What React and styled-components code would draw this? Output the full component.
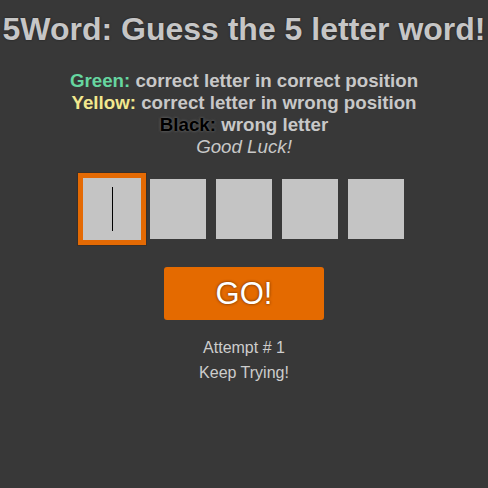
import React from "react";
import styled, { createGlobalStyle } from "styled-components";

const Global = createGlobalStyle`
  html, body { margin: 0; padding: 0; background: #383838; }
  body { font-family: "Liberation Sans", Arial, sans-serif; }
`;

const Page = styled.div`
  width: 488px;
  min-height: 488px;
  display: flex;
  flex-direction: column;
  align-items: center;
  padding-top: 11px;
  box-sizing: border-box;
  color: #c8c8c8;
`;

const Title = styled.h1`
  margin: 0;
  font-size: 32px;
  line-height: 37px;
  font-weight: bold;
  color: #c6c6c6;
  white-space: nowrap;
  text-shadow: 0 0 2px #1a1a1a;
`;

const Legend = styled.div`
  margin-top: 22px;
  display: flex;
  flex-direction: column;
  align-items: center;
`;

const Line = styled.div`
  font-size: 18.72px;
  line-height: 22px;
  font-weight: ${(p) => (p.$italic ? "normal" : "bold")};
  font-style: ${(p) => (p.$italic ? "italic" : "normal")};
  color: #c8c8c8;
  white-space: nowrap;
`;

const Label = styled.span`
  color: ${(p) => p.$color};
  text-shadow: ${(p) => (p.$glow ? "0 0 3px #777" : "none")};
`;

const Boxes = styled.div`
  margin-top: 21px;
  display: flex;
  gap: 10px;
`;

const Box = styled.div`
  width: 56px;
  height: 60px;
  background: #c4c4c4;
  display: flex;
  align-items: center;
  justify-content: center;
  box-shadow: ${(p) =>
    p.$active ? "0 0 0 1px #c4c4c4, 0 0 0 6px #e46a04, 0 0 0 7px #3a3028" : "none"};
`;

const Caret = styled.span`
  width: 1px;
  height: 44px;
  background: #000;
`;

const GoButton = styled.button`
  margin-top: 28px;
  width: 160px;
  height: 53px;
  border: none;
  border-radius: 3px;
  background: #e46a00;
  color: #fff;
  font-family: "Liberation Sans", Arial, sans-serif;
  font-size: 31px;
  padding: 0;
  text-shadow: 0 0 3px #5a2a00;
  cursor: pointer;
`;

const Status = styled.div`
  margin-top: 15px;
  display: flex;
  flex-direction: column;
  align-items: center;
`;

const StatusLine = styled.div`
  font-size: 16px;
  line-height: 25px;
  color: #cdcdcd;
`;

export default function App() {
  return (
    <>
      <Global />
      <Page>
        <Title>5Word: Guess the 5 letter word!</Title>
        <Legend>
          <Line>
            <Label $color="#66d6a0">Green:</Label> correct letter in correct position
          </Line>
          <Line>
            <Label $color="#f2e88e">Yellow:</Label> correct letter in wrong position
          </Line>
          <Line>
            <Label $color="#000" $glow>Black:</Label> wrong letter
          </Line>
          <Line $italic>Good Luck!</Line>
        </Legend>
        <Boxes>
          <Box $active>
            <Caret />
          </Box>
          <Box />
          <Box />
          <Box />
          <Box />
        </Boxes>
        <GoButton>GO!</GoButton>
        <Status>
          <StatusLine>Attempt # 1</StatusLine>
          <StatusLine>Keep Trying!</StatusLine>
        </Status>
      </Page>
    </>
  );
}
